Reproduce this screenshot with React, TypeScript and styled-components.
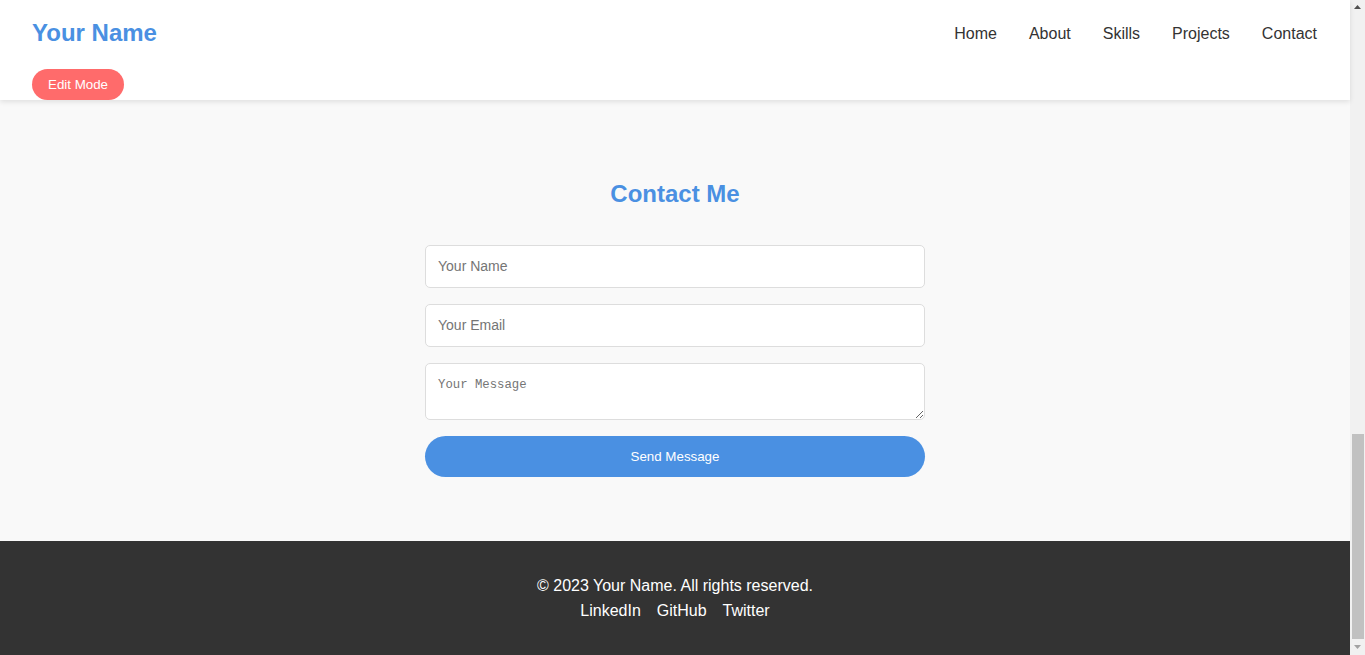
import React from "react";
import styled, { createGlobalStyle } from "styled-components";

const GlobalStyle = createGlobalStyle`
  html, body { height: 100%; }
  body {
    margin: 0;
    font-family: "Liberation Sans", Arial, sans-serif;
    color: #333;
    background: #f9f9f9;
    overflow: hidden;
  }
  * { box-sizing: border-box; }
`;

const Root = styled.div`
  display: flex;
  height: 100vh;
`;

const Page = styled.div`
  flex: 1;
  min-width: 0;
  display: flex;
  flex-direction: column;
`;

const Header = styled.header`
  position: relative;
  z-index: 1;
  height: 100px;
  padding: 19px 33px 0 32px;
  background: #fff;
  box-shadow: 0 2px 5px rgba(0, 0, 0, 0.1);
  display: flex;
  flex-direction: column;
  align-items: flex-start;
`;

const TopRow = styled.div`
  width: 100%;
  display: flex;
  justify-content: space-between;
  align-items: center;
  height: 28px;
`;

const Logo = styled.div`
  font-size: 24px;
  font-weight: 700;
  color: #4a90e2;
`;

const Nav = styled.nav`
  display: flex;
  gap: 32px;
  padding-top: 1px;
`;

const NavLink = styled.a`
  font-size: 16px;
  color: #333;
  text-decoration: none;
`;

const EditButton = styled.button`
  margin-top: 22px;
  height: 31px;
  padding: 0 16px;
  border: none;
  border-radius: 20px;
  background: #ff6b6b;
  color: #fff;
  font-family: "Liberation Sans", Arial, sans-serif;
  font-size: 13.33px;
`;

const ContactSection = styled.section`
  flex: 1;
  padding: 60px 32px 64px;
  background: #f9f9f9;
  text-align: center;
`;

const SectionTitle = styled.h2`
  font-size: 24px;
  font-weight: 700;
  color: #4a90e2;
  margin: 20px 0 37px;
  line-height: 28px;
`;

const Form = styled.form`
  width: 500px;
  margin: 0 auto;
  display: flex;
  flex-direction: column;
  gap: 16px;
`;

const Input = styled.input`
  height: 43px;
  padding: 11px 12px 13px;
  border: 1px solid #ddd;
  border-radius: 5px;
  background: #fff;
  font-family: "Liberation Sans", Arial, sans-serif;
  font-size: 14px;
  color: #333;
  &::placeholder { color: #757575; }
`;

const TextArea = styled.textarea`
  height: 57px;
  padding: 14px 12px 10px;
  border: 1px solid #ddd;
  border-radius: 5px;
  background: #fff;
  font-family: "Liberation Mono", monospace;
  font-size: 12.3px;
  resize: vertical;
  &::placeholder { color: #757575; }
`;

const SendButton = styled.button`
  height: 41px;
  border: none;
  border-radius: 25px;
  background: #4a90e2;
  color: #fff;
  font-family: "Liberation Sans", Arial, sans-serif;
  font-size: 13.33px;
`;

const Footer = styled.footer`
  height: 114px;
  background: #333;
  color: #fff;
  text-align: center;
  padding-top: 36px;
  font-size: 16px;
  line-height: 18px;
`;

const FooterText = styled.p`
  margin: 0 0 7px;
`;

const FooterLink = styled.a`
  color: #fff;
  text-decoration: none;
  margin: 0 8px;
`;

const Scrollbar = styled.div`
  width: 15px;
  flex: none;
  background: #f1f1f1;
  display: flex;
  flex-direction: column;
`;

const ArrowBox = styled.div`
  width: 15px;
  height: 15px;
  display: flex;
  align-items: center;
  justify-content: center;
`;

const Track = styled.div`
  flex: 1;
  display: flex;
  flex-direction: column;
  justify-content: flex-end;
  padding: 0 1px 1px 2px;
`;

const Thumb = styled.div`
  height: 205px;
  background: #c1c1c1;
`;

export default function App() {
  return (
    <>
      <GlobalStyle />
      <Root>
        <Page>
          <Header>
            <TopRow>
              <Logo>Your Name</Logo>
              <Nav>
                <NavLink href="#home">Home</NavLink>
                <NavLink href="#about">About</NavLink>
                <NavLink href="#skills">Skills</NavLink>
                <NavLink href="#projects">Projects</NavLink>
                <NavLink href="#contact">Contact</NavLink>
              </Nav>
            </TopRow>
            <EditButton>Edit Mode</EditButton>
          </Header>
          <ContactSection id="contact">
            <SectionTitle>Contact Me</SectionTitle>
            <Form onSubmit={(e) => e.preventDefault()}>
              <Input type="text" placeholder="Your Name" />
              <Input type="email" placeholder="Your Email" />
              <TextArea placeholder="Your Message" />
              <SendButton type="submit">Send Message</SendButton>
            </Form>
          </ContactSection>
          <Footer>
            <FooterText>© 2023 Your Name. All rights reserved.</FooterText>
            <div>
              <FooterLink href="#">LinkedIn</FooterLink>
              <FooterLink href="#">GitHub</FooterLink>
              <FooterLink href="#">Twitter</FooterLink>
            </div>
          </Footer>
        </Page>
        <Scrollbar aria-hidden="true">
          <ArrowBox>
            <svg width="15" height="15" viewBox="0 0 15 15">
              <polygon points="4,9 11,9 7.5,5" fill="#505050" />
            </svg>
          </ArrowBox>
          <Track>
            <Thumb />
          </Track>
          <ArrowBox>
            <svg width="15" height="15" viewBox="0 0 15 15">
              <polygon points="4,5 11,5 7.5,9" fill="#a3a3a3" />
            </svg>
          </ArrowBox>
        </Scrollbar>
      </Root>
    </>
  );
}
